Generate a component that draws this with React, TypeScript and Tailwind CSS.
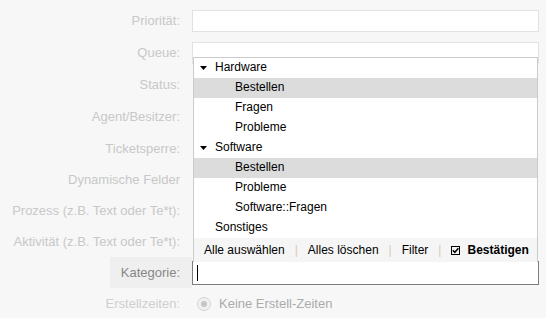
const rows = [
    { label: "Priorität:", h: "h-[32px]", kind: "input" },
    { label: "Queue:", h: "h-[32px]", kind: "input" },
    { label: "Status:", h: "h-[32px]", kind: "none" },
    { label: "Agent/Besitzer:", h: "h-[32px]", kind: "none" },
    { label: "Ticketsperre:", h: "h-[31px]", kind: "none" },
    { label: "Dynamische Felder", h: "h-[32px]", kind: "none" },
    { label: "Prozess (z.B. Text oder Te*t):", h: "h-[30px]", kind: "none" },
    { label: "Aktivität (z.B. Text oder Te*t):", h: "h-[31px]", kind: "none" },
];

const tree = [
    { text: "Hardware", level: 0, open: true },
    { text: "Bestellen", level: 1, active: true },
    { text: "Fragen", level: 1 },
    { text: "Probleme", level: 1 },
    { text: "Software", level: 0, open: true },
    { text: "Bestellen", level: 1, active: true },
    { text: "Probleme", level: 1 },
    { text: "Software::Fragen", level: 1 },
    { text: "Sonstiges", level: 0 },
];

const Caret = () => (
    <svg width="7" height="4" viewBox="0 0 7 4" className="block">
        <path d="M0 0 H7 L3.5 4 Z" fill="#000" />
    </svg>
);

const CheckIcon = () => (
    <svg width="9" height="9" viewBox="0 0 9 9" className="block">
        <rect x="0.5" y="0.5" width="8" height="8" fill="none" stroke="#000" />
        <path d="M1.8 4.3 L3.8 6.3 L7.4 2.2" fill="none" stroke="#000" strokeWidth="1.5" />
    </svg>
);

const Sep = () => <span className="mx-[10px] text-[#d9c9b8]">|</span>;

const TreeList = () => (
    <div className="absolute bottom-full left-0 z-10 w-full border-x border-t border-[#cbcbcb] bg-white text-[12px] text-black">
        {tree.map((item, i) => (
            <div
                key={i}
                className={`flex h-[20px] items-center leading-[18px] ${item.active ? "bg-[#dcdcdc]" : ""}`}
            >
                <div className={`flex shrink-0 items-center pl-[6px] ${item.level === 0 ? "w-[21px]" : "w-[41px]"}`}>
                    {item.open && <Caret />}
                </div>
                <span className="pb-[2px]">{item.text}</span>
            </div>
        ))}
        <div className="flex h-[24px] items-center bg-[#f5f5f5] pl-[10px] leading-[24px]">
            <span>Alle auswählen</span>
            <Sep />
            <span>Alles löschen</span>
            <Sep />
            <span>Filter</span>
            <Sep />
            <CheckIcon />
            <span className="ml-[7px] font-bold">Bestätigen</span>
        </div>
    </div>
);

export default function App() {
    return (
        <div className="min-h-screen bg-[#f7f7f7] pt-[5px] font-['Liberation_Sans',Arial,sans-serif] text-[13px]">
            {rows.map((row) => (
                <div key={row.label} className={`flex items-center ${row.h}`}>
                    <div className="w-[180px] shrink-0 text-right text-[#c8c8c8]">{row.label}</div>
                    {row.kind === "input" && (
                        <div className="ml-[12px] h-[22px] w-[347px] border border-[#e2e2e2] bg-white" />
                    )}
                </div>
            ))}

            <div className="flex h-[31px] items-stretch">
                <div className="flex w-[192px] shrink-0 justify-end">
                    <div className="flex w-[82px] items-center justify-end bg-[#efefef] pr-[12px] text-[#878787]">
                        Kategorie:
                    </div>
                </div>
                <div className="relative mt-[4px] h-[24px] w-[347px] border border-[#7d7d7d] bg-white">
                    <TreeList />
                    <div className="ml-[4px] mt-[3px] h-[16px] w-px bg-black" />
                </div>
            </div>

            <div className="flex h-[32px] items-center">
                <div className="w-[180px] shrink-0 text-right text-[#cfcfcf]">Erstellzeiten:</div>
                <div className="ml-[17px] flex h-[14px] w-[14px] items-center justify-center rounded-full border border-[#d4d4d4] bg-[#f0f0f0]">
                    <div className="h-[6px] w-[6px] rounded-full bg-[#c4c4c4]" />
                </div>
                <span className="ml-[8px] text-[#ababab]">Keine Erstell-Zeiten</span>
            </div>
        </div>
    );
}
